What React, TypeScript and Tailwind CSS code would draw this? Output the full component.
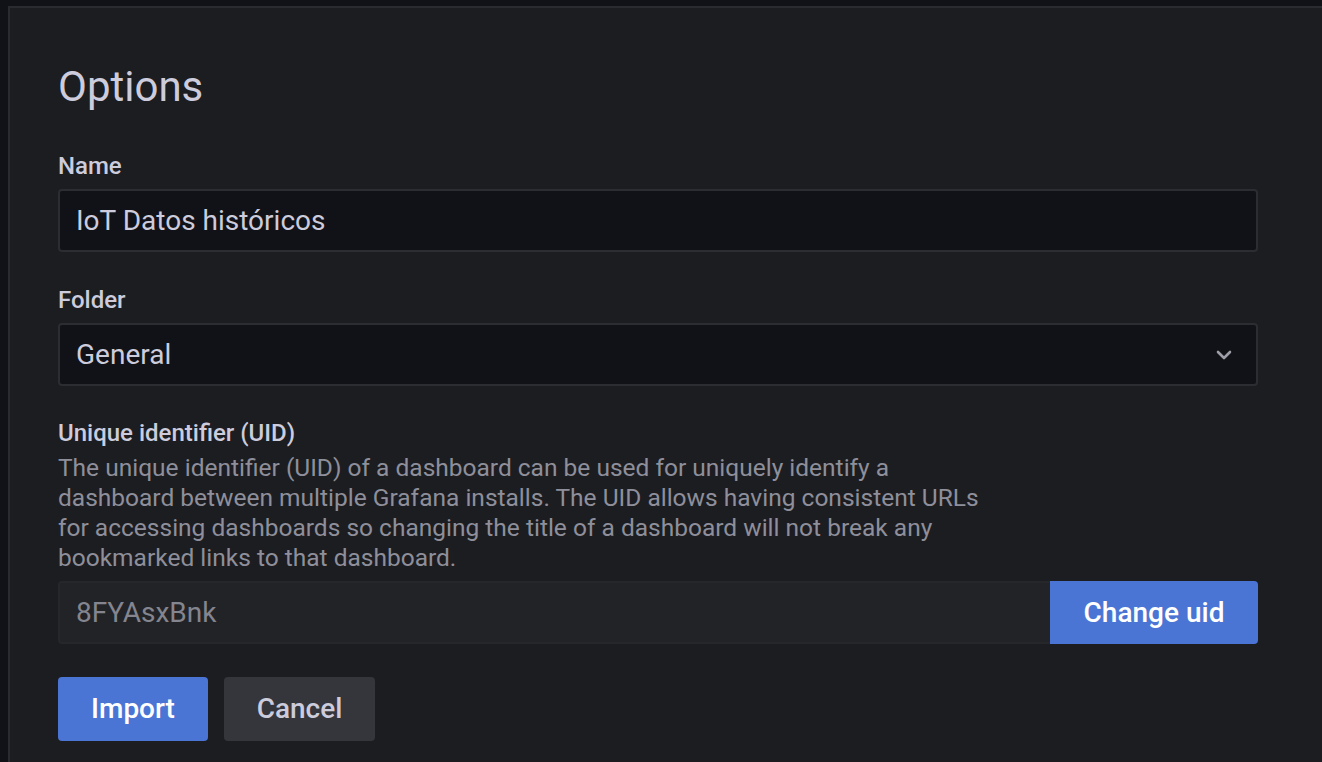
export default function App() {
  return (
    <div
      className="h-[762px] overflow-hidden bg-[#111217] pl-[8px] pt-[6px] text-[#ccccdc]"
      style={{ fontFamily: "Roboto, 'Noto Sans', sans-serif" }}
    >
      <div className="h-[800px] border-l-2 border-t-2 border-[#2a2b30] bg-[#1c1d21] pl-[48px] pt-[54px]">
        <div className="w-[1200px]">
          <h3 className="text-[42px] leading-[50px] font-normal">Options</h3>

          {/* name */}
          <label className="mt-[39px] block text-[24px] leading-[30px] font-medium">Name</label>
          <div className="mt-[8px] flex h-[63px] items-center rounded-[4px] border-2 border-[#2c2d32] bg-[#111217] px-[16px] text-[28px]">
            IoT Datos históricos
          </div>

          {/* folder */}
          <label className="mt-[33px] block text-[24px] leading-[30px] font-medium">Folder</label>
          <div className="mt-[8px] flex h-[63px] items-center justify-between rounded-[4px] border-2 border-[#2c2d32] bg-[#111217] pl-[16px] pr-[24px] text-[28px]">
            <span>General</span>
            <svg width="16" height="10" viewBox="0 0 16 10" fill="none">
              <polyline
                points="2,2 8,8 14,2"
                stroke="#9d9ea8"
                strokeWidth="2.6"
                strokeLinecap="round"
                strokeLinejoin="round"
              />
            </svg>
          </div>

          {/* uid */}
          <label className="mt-[32px] block text-[24px] leading-[30px] font-medium">
            Unique identifier (UID)
          </label>
          <p className="mt-[5px] max-w-[940px] text-[24.5px] leading-[30px] text-[#8e8f9a]">
            The unique identifier (UID) of a dashboard can be used for uniquely identify a dashboard
            between multiple Grafana installs. The UID allows having consistent URLs for accessing
            dashboards so changing the title of a dashboard will not break any bookmarked links to
            that dashboard.
          </p>
          <div className="mt-[8px] flex h-[63px]">
            <div className="flex flex-1 items-center rounded-l-[4px] border-2 border-r-0 border-[#26272b] bg-[#222327] px-[16px] text-[28px] text-[#84858f]">
              8FYAsxBnk
            </div>
            <button className="w-[208px] rounded-r-[4px] bg-[#4a75d5] text-[28px] font-medium text-white">
              Change uid
            </button>
          </div>

          {/* actions */}
          <div className="mt-[33px] flex gap-[16px]">
            <button className="h-[64px] w-[150px] rounded-[4px] bg-[#4a75d5] text-[28px] font-medium text-white">
              Import
            </button>
            <button className="h-[64px] w-[151px] rounded-[4px] bg-[#35363b] text-[28px] font-medium text-[#ccccdc]">
              Cancel
            </button>
          </div>
        </div>
      </div>
    </div>
  );
}
